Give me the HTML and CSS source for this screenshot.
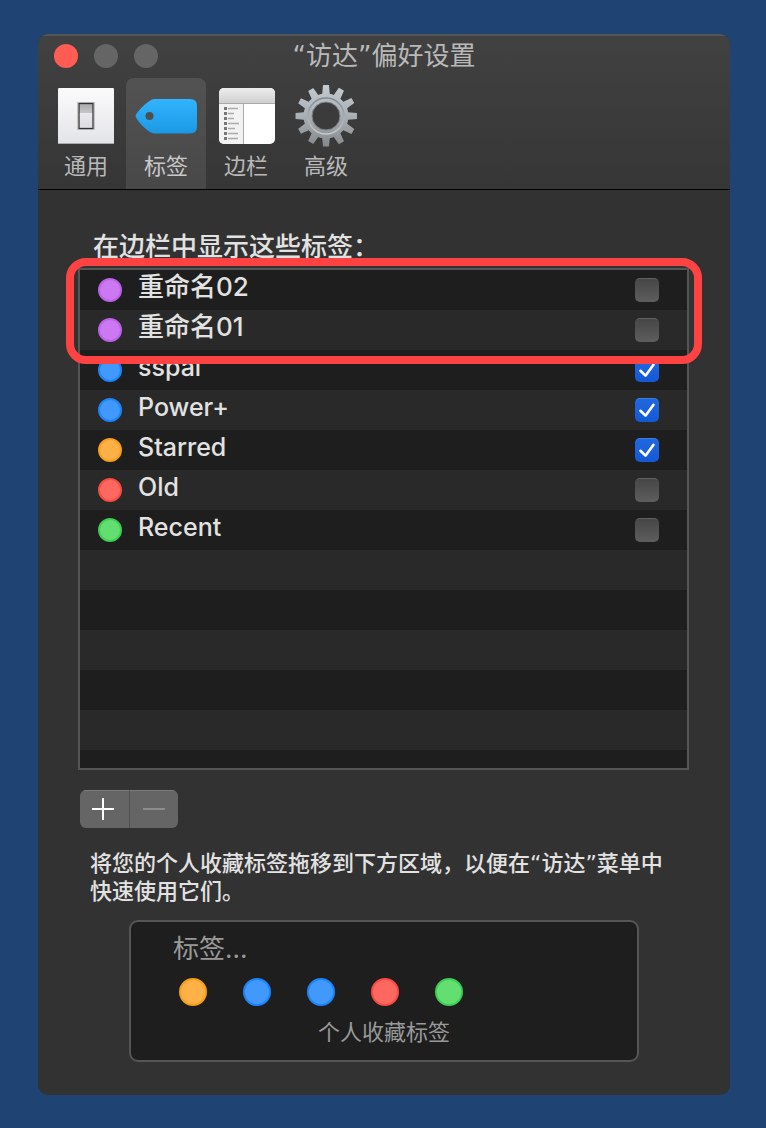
FILE: index.html
```html
<!DOCTYPE html>
<html lang="zh-CN">
<head>
<meta charset="utf-8">
<meta name="viewport" content="width=device-width, initial-scale=1">
<title>“访达”偏好设置</title>
<link rel="stylesheet" href="styles.css">
</head>
<body>
<main class="window">
  <header class="chrome">
    <div class="titlebar">
      <div class="lights">
        <button class="light light-close" type="button" aria-label="关闭"></button>
        <button class="light" type="button" aria-label="最小化" disabled></button>
        <button class="light" type="button" aria-label="缩放" disabled></button>
      </div>
      <h1 class="title">“访达”偏好设置</h1>
    </div>
    <nav class="toolbar">
      <button class="tab" type="button">
        <svg class="tab-icon" viewBox="0 0 64 64" aria-hidden="true">
          <defs>
            <linearGradient id="plate" x1="0" y1="0" x2="0" y2="1"><stop offset="0" stop-color="#fbfbfc"/><stop offset="1" stop-color="#e3e4e8"/></linearGradient>
            <linearGradient id="rocker" x1="0" y1="0" x2="0" y2="1"><stop offset="0" stop-color="#a9a9ab"/><stop offset=".36" stop-color="#c5c5c8"/><stop offset=".4" stop-color="#e9e9ed"/><stop offset="1" stop-color="#dcdce0"/></linearGradient>
          </defs>
          <rect x="4" y="4" width="56" height="56" rx="1" fill="url(#plate)"/>
          <path d="M4 59.5h56" stroke="#aaabad"/>
          <rect x="23.500" y="18.500" width="17" height="27" fill="#f8f8f8" stroke="#c4c4c4"/>
          <rect x="25" y="19.500" width="14" height="25" fill="url(#rocker)" stroke="#333" stroke-width="1.300"/>
        </svg>
        <span>通用</span>
      </button>
      <button class="tab tab-active" type="button" aria-current="page">
        <svg class="tab-icon" viewBox="0 0 64 64" aria-hidden="true">
          <defs><linearGradient id="tag" x1="0" y1="0" x2="0" y2="1"><stop offset="0" stop-color="#31b4fd"/><stop offset="1" stop-color="#1b98e4"/></linearGradient></defs>
          <path fill="url(#tag)" fill-rule="evenodd" d="M2 30.500Q1 32 2 33.500C6 40 12 46 17 48.500Q18.500 49.500 21 49.500H56Q63 49.500 63 42.500V22Q63 15 56 15H21Q18.500 15 17 16C12 19 6 24.500 2 30.500ZM15.500 28a4 4 0 1 1 0 8a4 4 0 1 1 0-8Z"/>
        </svg>
        <span>标签</span>
      </button>
      <button class="tab" type="button">
        <svg class="tab-icon" viewBox="0 0 64 64" aria-hidden="true">
          <defs>
            <linearGradient id="bar" x1="0" y1="0" x2="0" y2="1"><stop offset="0" stop-color="#eee"/><stop offset="1" stop-color="#cfcfcf"/></linearGradient>
            <clipPath id="pane"><rect x="5" y="4" width="56" height="56" rx="5"/></clipPath>
          </defs>
          <g clip-path="url(#pane)">
            <path fill="#fff" d="M5 4h56v56H5z"/>
            <path fill="url(#bar)" d="M5 4h56v15H5z"/>
            <path fill="#f2f2f2" d="M5 19h24v41H5z"/>
            <path d="M5 19.500h56M29.500 19v41" stroke="#aaa" fill="none"/>
          </g>
          <g fill="none" stroke="#777">
            <path stroke-width="3" stroke-dasharray="3 2" d="M11.500 23v33"/>
            <path stroke="#aaa" stroke-width="1.500" d="M14 24.500h10M14 29.500h6M14 34.500h6M14 39.500h11M14 44.500h7M14 49.500h10M14 54.500h10"/>
          </g>
        </svg>
        <span>边栏</span>
      </button>
      <button class="tab" type="button">
        <svg class="tab-icon" viewBox="0 0 64 64" aria-hidden="true">
          <defs>
            <linearGradient id="steel" gradientUnits="userSpaceOnUse" x1="0" y1="1" x2="0" y2="63"><stop offset="0" stop-color="#c3ccd2"/><stop offset=".5" stop-color="#a9b0b5"/><stop offset="1" stop-color="#85888b"/></linearGradient>
            <linearGradient id="rim" x1="0" y1="0" x2="0" y2="1"><stop offset="0" stop-color="#818a90"/><stop offset="1" stop-color="#c7cacb"/></linearGradient>
            <path id="teeth" d="M28 12L29 1.500Q29 1 29.500 1H34.500Q35 1 35 1.500L36 12ZM28 52L29 62Q29 62.500 29.500 62.500H34.500Q35 62.500 35 62L36 52Z"/>
            <clipPath id="gear">
              <use href="#teeth"/>
              <use href="#teeth" transform="rotate(30 32 32)"/>
              <use href="#teeth" transform="rotate(60 32 32)"/>
              <use href="#teeth" transform="rotate(90 32 32)"/>
              <use href="#teeth" transform="rotate(120 32 32)"/>
              <use href="#teeth" transform="rotate(150 32 32)"/>
              <path clip-rule="evenodd" d="M32 9.500a22.500 22.500 0 1 1 0 45a22.500 22.500 0 1 1 0-45ZM32 18a14 14 0 1 0 0 28a14 14 0 1 0 0-28Z"/>
            </clipPath>
          </defs>
          <path clip-path="url(#gear)" fill="url(#steel)" d="M0 0h64v64H0z"/>
          <circle cx="32" cy="32" r="18" fill="none" stroke="url(#rim)" stroke-width="1.500"/>
          <circle cx="32" cy="32" r="14" fill="none" stroke="#7f868a"/>
        </svg>
        <span>高级</span>
      </button>
    </nav>
  </header>

  <section class="content">
    <h2 class="heading">在边栏中显示这些标签：</h2>
    <div class="list">
      <table class="tags">
        <tbody>
          <tr><td class="cell-dot"><span class="dot purple"></span></td><td class="cell-name cell-name-cjk"><label for="t1">重命名02</label></td><td class="cell-check"><input class="check" id="t1" type="checkbox"></td></tr>
          <tr><td class="cell-dot"><span class="dot purple"></span></td><td class="cell-name cell-name-cjk"><label for="t2">重命名01</label></td><td class="cell-check"><input class="check" id="t2" type="checkbox"></td></tr>
          <tr><td class="cell-dot"><span class="dot blue"></span></td><td class="cell-name"><label for="t3">sspai</label></td><td class="cell-check"><input class="check" id="t3" type="checkbox" checked></td></tr>
          <tr><td class="cell-dot"><span class="dot blue"></span></td><td class="cell-name"><label for="t4">Power+</label></td><td class="cell-check"><input class="check" id="t4" type="checkbox" checked></td></tr>
          <tr><td class="cell-dot"><span class="dot orange"></span></td><td class="cell-name"><label for="t5">Starred</label></td><td class="cell-check"><input class="check" id="t5" type="checkbox" checked></td></tr>
          <tr><td class="cell-dot"><span class="dot red"></span></td><td class="cell-name"><label for="t6">Old</label></td><td class="cell-check"><input class="check" id="t6" type="checkbox"></td></tr>
          <tr><td class="cell-dot"><span class="dot green"></span></td><td class="cell-name"><label for="t7">Recent</label></td><td class="cell-check"><input class="check" id="t7" type="checkbox"></td></tr>
        </tbody>
      </table>
      <div class="highlight"></div>
    </div>
    <div class="actions">
      <button class="action" type="button" aria-label="添加标签"><svg class="action-icon" viewBox="0 0 24 24" aria-hidden="true"><path d="M1 12h22M12 1v22"/></svg></button>
      <button class="action" type="button" aria-label="移除标签" disabled><svg class="action-icon" viewBox="0 0 24 24" aria-hidden="true"><path d="M1 12h22"/></svg></button>
    </div>
    <p class="hint">将您的个人收藏标签拖移到下方区域，以便在“访达”菜单中快速使用它们。</p>
    <div class="favorites">
      <div class="fav-title">标签...</div>
      <div class="fav-dots">
        <span class="dot orange"></span>
        <span class="dot blue"></span>
        <span class="dot blue"></span>
        <span class="dot red"></span>
        <span class="dot green"></span>
      </div>
      <div class="fav-caption">个人收藏标签</div>
    </div>
  </section>
</main>
</body>
</html>
```

FILE: styles.css
```css
* {
  box-sizing: border-box;
}

body {
  margin: 0;
  padding: 34px 36px 32px 38px;
  background: #1f4473;
  color: #e2e2e2;
  font: 26px/32px Inter, "Noto Sans CJK SC", sans-serif;
}

button {
  margin: 0;
  padding: 0;
  border: 0;
  background: none;
  color: inherit;
  font: inherit;
}

.window {
  overflow: hidden;
  border-radius: 10px;
  background: #323232;
}

.chrome {
  border-top: 2px solid #555;
  border-bottom: 1px solid #000;
  background: linear-gradient(#414141, #363636);
  color: #b9b9b9;
}

.titlebar {
  display: grid;
  grid-template-columns: 1fr auto 1fr;
  align-items: center;
  height: 40px;
}

.lights {
  display: flex;
  gap: 16px;
  padding-left: 16px;
}

.light {
  width: 24px;
  height: 24px;
  border-radius: 50%;
  background: #656565;
}

.light-close {
  background: #ff5c54;
}

.title {
  margin: 0;
  font-family: "DejaVu Sans", "Noto Sans CJK SC", sans-serif;
  font-size: 26px;
  font-weight: 400;
}

.toolbar {
  display: flex;
  padding: 2px 0 0 8px;
}

.tab {
  display: flex;
  flex-direction: column;
  align-items: center;
  gap: 4px;
  width: 80px;
  padding: 6px 0 9px;
  border-radius: 8px 8px 0 0;
  font-size: 22px;
  line-height: 28px;
}

.tab-active {
  background: linear-gradient(#525252, #484848);
  color: #c8c8c8;
}

.tab-icon {
  width: 64px;
  height: 64px;
}

.content {
  padding: 41px 41px 33px 40px;
}

.heading {
  margin: 0 0 5px 15px;
  font-size: 26px;
  font-weight: 500;
}

.list {
  position: relative;
  min-height: 502px;
  border: 2px solid #555;
  background: repeating-linear-gradient(#1e1e1e 0 40px, #292929 40px 80px);
}

.tags {
  width: 100%;
  border-collapse: collapse;
}

.tags td {
  height: 40px;
  padding: 0;
  vertical-align: middle;
}

.tags .cell-dot {
  width: 58px;
  padding-left: 18px;
}

.tags .cell-name {
  padding-bottom: 6px;
  font-size: 25px;
  font-weight: 500;
}

.tags .cell-name-cjk {
  font-size: 26px;
}

.tags .cell-name label {
  display: block;
}

.tags .cell-check {
  width: 52px;
}

.dot {
  display: block;
  width: 24px;
  height: 24px;
  border: 2px solid;
  border-radius: 50%;
}

.purple {
  border-color: #bd62e8;
  background: #cc78f3;
}

.blue {
  border-color: #1b85fb;
  background: #4198ff;
}

.orange {
  border-color: #f79e1c;
  background: #ffb047;
}

.red {
  border-color: #f84c43;
  background: #ff6860;
}

.green {
  border-color: #3dce53;
  background: #62df70;
}

.check {
  display: block;
  width: 24px;
  height: 24px;
  margin: 0;
  border-top: 1px solid #626262;
  border-radius: 5px;
  background: linear-gradient(#464646, #5e5e5e);
  appearance: none;
}

.check:checked {
  border-color: #3d7be6;
  background: url("data:image/svg+xml,%3Csvg xmlns='http://www.w3.org/2000/svg' viewBox='0 0 24 24'%3E%3Cpath d='M5.500 12l5 5 8-11' fill='none' stroke='white' stroke-width='2.600' stroke-linecap='round' stroke-linejoin='round'/%3E%3C/svg%3E") center / 24px 24px no-repeat, linear-gradient(#2168e0, #1459d4);
}

.highlight {
  position: absolute;
  top: -12px;
  right: -15px;
  left: -14px;
  height: 106px;
  border: 8px solid #ff4343;
  border-radius: 20px;
  pointer-events: none;
}

.actions {
  display: flex;
  width: max-content;
  margin: 20px 0 0 2px;
  overflow: hidden;
  border-radius: 6px;
}

.action {
  display: grid;
  place-items: center;
  width: 49px;
  height: 38px;
  border-top: 1px solid #7b7b7b;
  padding: 0 3px 1px 0;
  background: #656565;
  color: #fff;
}

.action + .action {
  padding-right: 0;
  border-left: 1px solid #505050;
}

.action:disabled {
  color: #8c8c8c;
}

.action-icon {
  width: 24px;
  height: 24px;
  fill: none;
  stroke: currentColor;
  stroke-width: 2;
}

.hint {
  margin: 22px 0 14px 12px;
  padding-right: 8px;
  font-family: "DejaVu Sans", "Noto Sans CJK SC", sans-serif;
  font-size: 22px;
  font-weight: 500;
  line-height: 28px;
}

.favorites {
  margin: 0 50px 0 51px;
  padding: 11px 42px 14px;
  border: 2px solid #555;
  border-radius: 9px;
  background: #1e1e1e;
  color: #999;
}

.fav-dots {
  display: flex;
  gap: 36px;
  margin: 13px 0 12px 6px;
}

.fav-dots .dot {
  width: 28px;
  height: 28px;
}

.fav-caption {
  font-size: 22px;
  line-height: 28px;
  text-align: center;
}
```
